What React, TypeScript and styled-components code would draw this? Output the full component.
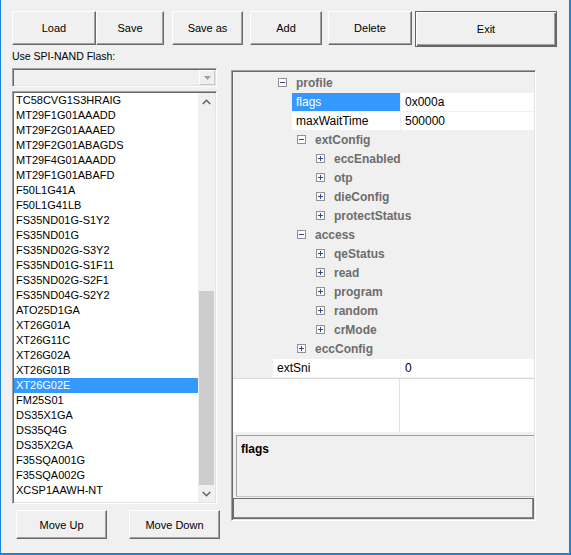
import React from "react";
import styled, { createGlobalStyle, css } from "styled-components";

const GlobalStyle = createGlobalStyle`
  html, body { margin: 0; padding: 0; background: #f0f0f0; }
  * { box-sizing: border-box; }
`;

const sunken = css`
  border: 1px solid;
  border-color: #a0a0a0 #ffffff #ffffff #a0a0a0;
  box-shadow: inset 1px 1px #696969, inset -1px -1px #e3e3e3;
  padding: 1px;
`;

const Window = styled.div`
  width: 571px;
  height: 555px;
  background: #f0f0f0;
  border-left: 1px solid #1883d7;
  border-right: 2px solid #1883d7;
  border-bottom: 2px solid #1883d7;
  padding: 11px 0 0 11px;
  display: flex;
  flex-direction: column;
  font-family: "Liberation Sans", Arial, sans-serif;
  color: #000;
  overflow: hidden;
`;

const Toolbar = styled.div`
  display: flex;
  align-items: flex-start;
  height: 36px;
`;

const Button = styled.button<{ $w: number; $h?: number; $ml?: number; $default?: boolean }>`
  width: ${(p) => p.$w}px;
  height: ${(p) => p.$h ?? 34}px;
  margin-left: ${(p) => p.$ml ?? 0}px;
  padding: 0;
  flex: none;
  background: #f0f0f0;
  font-family: inherit;
  font-size: 11px;
  color: #000;
  border: 1px solid;
  border-color: #ffffff #696969 #696969 #ffffff;
  box-shadow: inset -1px -1px #a0a0a0;
  ${(p) =>
    p.$default &&
    css`
      border: 1px solid #646464;
      box-shadow: inset 1px 1px #ffffff, inset -1px -1px #696969, inset -2px -2px #a0a0a0;
    `}
`;

const Body = styled.div`
  display: flex;
  align-items: flex-start;
`;

const LeftColumn = styled.div`
  width: 205px;
  flex: none;
  display: flex;
  flex-direction: column;
`;

const FieldLabel = styled.div`
  margin-top: 3px;
  font-size: 10.5px;
  line-height: 13px;
  height: 13px;
  white-space: nowrap;
`;

const Combo = styled.div`
  ${sunken};
  margin-top: 5px;
  height: 19px;
  background: #f0f0f0;
  display: flex;
  justify-content: flex-end;
`;

const DropButton = styled.div`
  width: 16px;
  height: 15px;
  border: 1px solid;
  border-color: #ffffff #c8c8c8 #c8c8c8 #ffffff;
  background: #f0f0f0;
  display: flex;
  align-items: center;
  justify-content: center;
`;

const ListBox = styled.div`
  ${sunken};
  margin-top: 4px;
  height: 413px;
  background: #fff;
  display: flex;
`;

const Items = styled.div`
  flex: 1;
  overflow: hidden;
`;

const Item = styled.div<{ $selected?: boolean }>`
  height: 15px;
  line-height: 15px;
  padding-left: 2px;
  font-size: 11px;
  white-space: nowrap;
  background: ${(p) => (p.$selected ? "#3399ff" : "transparent")};
  color: ${(p) => (p.$selected ? "#fff" : "#000")};
`;

const ScrollBar = styled.div`
  width: 17px;
  flex: none;
  background: #f0f0f0;
  display: flex;
  flex-direction: column;
`;

const ScrollArrow = styled.div`
  height: 17px;
  flex: none;
  display: flex;
  align-items: center;
  justify-content: center;
`;

const Track = styled.div<{ $offset: number }>`
  flex: 1;
  padding-top: ${(p) => p.$offset}px;
`;

const Thumb = styled.div<{ $size: number }>`
  height: ${(p) => p.$size}px;
  margin: 0 1px;
  background: #cdcdcd;
`;

const MoveRow = styled.div`
  margin-top: 6px;
  display: flex;
`;

const Frame = styled.div`
  ${sunken};
  margin-left: 14px;
  margin-top: 23px;
  width: 305px;
  height: 451px;
  flex: none;
  background: #f0f0f0;
  display: flex;
  flex-direction: column;
  overflow: hidden;
`;

const Tree = styled.div`
  padding-top: 2px;
  display: flex;
  flex-direction: column;
`;

const Row = styled.div`
  height: 19px;
  flex: none;
  display: flex;
  align-items: flex-start;
  font-size: 12px;
  white-space: nowrap;
`;

const NameCell = styled.div<{ $indent: number; $selected?: boolean }>`
  margin-left: ${(p) => p.$indent}px;
  width: ${(p) => 167 - p.$indent}px;
  height: 18px;
  line-height: 18px;
  padding-left: 4px;
  background: ${(p) => (p.$selected ? "#3399ff" : "#fff")};
  color: ${(p) => (p.$selected ? "#fff" : "#000")};
`;

const ValueCell = styled.div`
  margin-left: 1px;
  flex: 1;
  height: 18px;
  line-height: 18px;
  padding-left: 4px;
  background: #fff;
`;

const ExpanderIcon = styled.svg<{ $indent: number }>`
  margin-left: ${(p) => p.$indent}px;
  margin-top: 4px;
  flex: none;
  display: block;
`;

const CategoryLabel = styled.div`
  margin-left: 9px;
  line-height: 18px;
  font-weight: bold;
  color: #6d6d6d;
`;

const GridFill = styled.div`
  height: 54px;
  flex: none;
  border-top: 1px solid #dadada;
  background: #fff;
  display: flex;
`;

const FillName = styled.div`
  width: 167px;
  border-right: 1px solid #e3e3e3;
`;

const Description = styled.div`
  margin: 3px 0 0 3px;
  height: 62px;
  flex: none;
  border-top: 1px solid #a0a0a0;
  border-left: 1px solid #a0a0a0;
  border-bottom: 1px solid #c8c8c8;
  padding: 6px 4px;
  font-size: 12px;
  line-height: 14px;
  font-weight: bold;
`;

const StatusBox = styled.div`
  margin-top: 1px;
  height: 21px;
  flex: none;
  border: 1px solid #6d6d6d;
  box-shadow: inset -1px -1px #8a8a8a;
`;

const chips = [
  "TC58CVG1S3HRAIG",
  "MT29F1G01AAADD",
  "MT29F2G01AAAED",
  "MT29F2G01ABAGDS",
  "MT29F4G01AAADD",
  "MT29F1G01ABAFD",
  "F50L1G41A",
  "F50L1G41LB",
  "FS35ND01G-S1Y2",
  "FS35ND01G",
  "FS35ND02G-S3Y2",
  "FS35ND01G-S1F11",
  "FS35ND02G-S2F1",
  "FS35ND04G-S2Y2",
  "ATO25D1GA",
  "XT26G01A",
  "XT26G11C",
  "XT26G02A",
  "XT26G01B",
  "XT26G02E",
  "FM25S01",
  "DS35X1GA",
  "DS35Q4G",
  "DS35X2GA",
  "F35SQA001G",
  "F35SQA002G",
  "XCSP1AAWH-NT",
];

type TreeRow =
  | { kind: "cat"; level: number; label: string; open?: boolean }
  | { kind: "prop"; level: number; label: string; value: string; selected?: boolean };

const tree: TreeRow[] = [
  { kind: "cat", level: 0, label: "profile", open: true },
  { kind: "prop", level: 1, label: "flags", value: "0x000a", selected: true },
  { kind: "prop", level: 1, label: "maxWaitTime", value: "500000" },
  { kind: "cat", level: 1, label: "extConfig", open: true },
  { kind: "cat", level: 2, label: "eccEnabled" },
  { kind: "cat", level: 2, label: "otp" },
  { kind: "cat", level: 2, label: "dieConfig" },
  { kind: "cat", level: 2, label: "protectStatus" },
  { kind: "cat", level: 1, label: "access", open: true },
  { kind: "cat", level: 2, label: "qeStatus" },
  { kind: "cat", level: 2, label: "read" },
  { kind: "cat", level: 2, label: "program" },
  { kind: "cat", level: 2, label: "random" },
  { kind: "cat", level: 2, label: "crMode" },
  { kind: "cat", level: 1, label: "eccConfig" },
  { kind: "prop", level: 0, label: "extSni", value: "0" },
];

const Expander = ({ open, indent }: { open?: boolean; indent: number }) => (
  <ExpanderIcon $indent={indent} width={9} height={9} viewBox="0 0 9 9">
    <rect x="0.5" y="0.5" width="8" height="8" fill="#fcfcfc" stroke="#919191" />
    <path d="M2 4.5h5" stroke="#34488a" />
    {!open && <path d="M4.5 2v5" stroke="#34488a" />}
  </ExpanderIcon>
);

const Chevron = ({ down }: { down?: boolean }) => (
  <svg width={9} height={6} viewBox="0 0 9 6">
    <polyline
      points={down ? "0.8,1 4.5,4.7 8.2,1" : "0.8,5 4.5,1.3 8.2,5"}
      fill="none"
      stroke="#606060"
      strokeWidth={1.5}
    />
  </svg>
);

export default function App() {
  return (
    <>
      <GlobalStyle />
      <Window>
        <Toolbar>
          <Button $w={84}>Load</Button>
          <Button $w={68}>Save</Button>
          <Button $w={71} $ml={8}>Save as</Button>
          <Button $w={72} $ml={7}>Add</Button>
          <Button $w={84} $ml={6}>Delete</Button>
          <Button $w={142} $h={36} $ml={3} $default>Exit</Button>
        </Toolbar>
        <Body>
          <LeftColumn>
            <FieldLabel>Use SPI-NAND Flash:</FieldLabel>
            <Combo>
              <DropButton>
                <svg width={7} height={4} viewBox="0 0 7 4">
                  <path d="M0 0h7L3.5 4z" fill="#a0a0a0" />
                </svg>
              </DropButton>
            </Combo>
            <ListBox>
              <Items>
                {chips.map((c) => (
                  <Item key={c} $selected={c === "XT26G02E"}>
                    {c}
                  </Item>
                ))}
              </Items>
              <ScrollBar>
                <ScrollArrow>
                  <Chevron />
                </ScrollArrow>
                <Track $offset={181}>
                  <Thumb $size={194} />
                </Track>
                <ScrollArrow>
                  <Chevron down />
                </ScrollArrow>
              </ScrollBar>
            </ListBox>
            <MoveRow>
              <Button $w={91} $h={29} $ml={4}>Move Up</Button>
              <Button $w={91} $h={29} $ml={22}>Move Down</Button>
            </MoveRow>
          </LeftColumn>
          <Frame>
            <Tree>
              {tree.map((r) =>
                r.kind === "cat" ? (
                  <Row key={r.label}>
                    <Expander open={r.open} indent={45 + 19 * r.level} />
                    <CategoryLabel>{r.label}</CategoryLabel>
                  </Row>
                ) : (
                  <Row key={r.label}>
                    <NameCell $indent={40 + 19 * r.level} $selected={r.selected}>
                      {r.label}
                    </NameCell>
                    <ValueCell>{r.value}</ValueCell>
                  </Row>
                )
              )}
            </Tree>
            <GridFill>
              <FillName />
            </GridFill>
            <Description>flags</Description>
            <StatusBox />
          </Frame>
        </Body>
      </Window>
    </>
  );
}
